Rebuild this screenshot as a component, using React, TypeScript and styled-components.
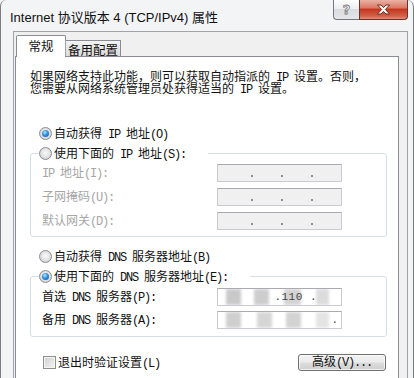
import React from 'react';
import styled, { createGlobalStyle } from 'styled-components';

const CJK = `"Noto Sans CJK SC", "Liberation Mono", sans-serif`;
const UI = `"Liberation Sans", "Noto Sans CJK SC", sans-serif`;

const GlobalStyle = createGlobalStyle`
  html, body { margin: 0; padding: 0; }
  body {
    width: 414px;
    height: 378px;
    overflow: hidden;
    background: #f3f4f6;
    font-family: ${CJK};
  }
`;

const Window = styled.div`
  width: 414px;
  height: 378px;
  box-sizing: border-box;
  display: flex;
  flex-direction: column;
  background: #f3f4f6;
  border-left: 1px solid #7d7d7d;
  border-right: 1px solid #7d7d7d;
  border-top-left-radius: 6px;
  border-top-right-radius: 7px;
  overflow: hidden;
`;

const TitleBar = styled.div`
  height: 31px;
  flex: none;
  display: flex;
  align-items: flex-start;
  padding: 0 5px 0 9px;
`;

const Title = styled.div`
  margin-top: 8px;
  font-family: ${UI};
  font-size: 13px;
  line-height: 19px;
  color: #111;
  white-space: nowrap;
`;

const Caption = styled.div`
  margin-left: auto;
  display: flex;
`;

const HelpButton = styled.div`
  width: 26px;
  height: 20px;
  box-sizing: border-box;
  border: 1px solid #74777c;
  border-top: none;
  border-right: none;
  border-bottom-left-radius: 4px;
  background: linear-gradient(#fdfdfd 0%, #eceef0 45%, #d9dcdf 50%, #e4e6e8 100%);
  display: flex;
  align-items: center;
  justify-content: center;
  font-family: "DejaVu Sans", sans-serif;
  font-size: 13px;
  font-weight: bold;
  color: #f4f4f4;
  -webkit-text-stroke: 0.8px #7a7a7a;
`;

const CloseButton = styled.div`
  width: 49px;
  height: 20px;
  box-sizing: border-box;
  border: 1px solid #6a3328;
  border-top: none;
  border-bottom-right-radius: 4px;
  background: linear-gradient(#eab2a5 0%, #dd7a66 40%, #c5371f 50%, #d1624a 85%, #e0917f 100%);
  display: flex;
  align-items: center;
  justify-content: center;
`;

const Client = styled.div`
  flex: 1;
  margin: 0 5px 0 12px;
  border: 1px solid #a3a3a3;
  border-bottom: none;
  background: #f0f0f0;
  padding: 0 8px 0 1px;
  display: flex;
  flex-direction: column;
`;

const TabStrip = styled.div`
  display: flex;
  align-items: flex-end;
  padding: 3px 0 0 1px;
  margin-bottom: -1px;
  position: relative;
  z-index: 1;
`;

const Tab = styled.div<{ $active?: boolean }>`
  box-sizing: border-box;
  display: flex;
  justify-content: center;
  font-family: "Noto Sans CJK SC", sans-serif;
  font-size: 12.5px;
  color: #111;
  border: 1px solid #898c95;
  border-bottom: none;
  ${(p) =>
    p.$active
      ? `
    width: 50px;
    height: 22px;
    padding-top: 3px;
    line-height: 14px;
    background: #fff;
    border-radius: 2px 2px 0 0;
  `
      : `
    width: 56px;
    height: 16px;
    margin-bottom: 1px;
    margin-left: -1px;
    line-height: 17px;
    background: linear-gradient(#f3f3f3, #e6e6e6 50%, #dcdcdc 100%);
    border-left-color: #a0a3aa;
  `}
`;

const Page = styled.div`
  flex: 1;
  border: 1px solid #898c95;
  border-bottom: none;
  background: #fff;
  padding: 13px 0 0 14px;
  display: flex;
  flex-direction: column;
`;

const Intro = styled.div`
  display: flex;
  flex-direction: column;
  font-size: 12px;
  color: #111;
`;

const IntroLine = styled.span`
  display: flex;
  align-items: center;
  height: 12px;
  white-space: pre;
`;

const Run = styled.span`
  white-space: pre;
`;

const Lat = styled.span`
  font-family: "Liberation Mono", monospace;
  font-size: 12px;
  letter-spacing: -1.2px;
`;

function Txt({ children }: { children: string }) {
  const parts = children.split(/([\x00-\x7f]+)/).filter(Boolean);
  return (
    <Run>
      {parts.map((s, i) =>
        /^[\x00-\x7f]+$/.test(s) ? <Lat key={i}>{s}</Lat> : <React.Fragment key={i}>{s}</React.Fragment>
      )}
    </Run>
  );
}

const Options = styled.div`
  margin-top: 29px;
  width: 357px;
  display: flex;
  flex-direction: column;
`;

const OptionRow = styled.label<{ $gap?: number }>`
  height: 20px;
  display: flex;
  align-items: center;
  padding-left: 9px;
  margin-top: ${(p) => p.$gap ?? 0}px;
  font-size: 12px;
  color: #111;
`;

const RadioMark = styled.span<{ $checked?: boolean }>`
  width: 13px;
  height: 13px;
  box-sizing: border-box;
  flex: none;
  margin-right: 2px;
  border-radius: 50%;
  border: 1px solid #8a8d92;
  background: radial-gradient(circle at 50% 45%, #fafafa 0%, #e6e6e6 45%, #c3c4c6 100%);
  display: inline-flex;
  align-items: center;
  justify-content: center;
  &::after {
    content: '';
    display: ${(p) => (p.$checked ? 'block' : 'none')};
    width: 7px;
    height: 7px;
    border-radius: 50%;
    background: radial-gradient(circle at 40% 35%, #b4ecff 0%, #3b97e0 40%, #0e4b9e 100%);
  }
`;

const Group = styled.fieldset`
  margin: 0;
  padding: 0;
  box-sizing: border-box;
  width: 357px;
  border: 1px solid #d5dfe5;
  border-radius: 3px;
`;

const Legend = styled.legend`
  margin-left: 8px;
  padding: 0 22px 0 0;
  height: 20px;
  display: flex;
  align-items: center;
  font-size: 12px;
  color: #111;
`;

const Rows = styled.div<{ $top: number; $gap: number; $bottom: number }>`
  display: flex;
  flex-direction: column;
  gap: ${(p) => p.$gap}px;
  padding: ${(p) => p.$top}px 0 ${(p) => p.$bottom}px 11px;
`;

const FieldRow = styled.div`
  height: 18px;
  display: grid;
  grid-template-columns: 175px 125px;
  align-items: center;
`;

const FieldLabel = styled.span<{ $disabled?: boolean }>`
  font-size: 12px;
  line-height: 16px;
  color: ${(p) => (p.$disabled ? '#a6a6a6' : '#111')};
  white-space: pre;
`;

const IpField = styled.div<{ $disabled?: boolean }>`
  position: relative;
  height: 18px;
  box-sizing: border-box;
  border: 1px solid #c9cbd0;
  border-top-color: #a9abb0;
  background: ${(p) => (p.$disabled ? '#f0f0f0' : '#ffffff')};
  display: flex;
  align-items: center;
  justify-content: center;
  gap: 28px;
  padding-left: 4px;
  overflow: hidden;
`;

const Dot = styled.span`
  width: 2px;
  height: 2px;
  margin-top: 6px;
  background: #8d8d8d;
`;

const Blur = styled.div`
  position: absolute;
  inset: -2px 8px -2px -6px;
  display: flex;
  align-items: center;
  filter: blur(1.6px);
  background: radial-gradient(ellipse at 45% 50%, #ffffff 60%, rgba(255,255,255,0) 100%);
`;

const Patch = styled.span<{ $w: number; $ml: number; $shade: string }>`
  width: ${(p) => p.$w}px;
  height: 16px;
  margin-left: ${(p) => p.$ml}px;
  background: ${(p) => p.$shade};
  flex: none;
`;

const FieldValue = styled.span`
  position: absolute;
  right: 24px;
  top: 1px;
  font-family: "Liberation Mono", monospace;
  font-size: 11px;
  line-height: 14px;
  letter-spacing: 0.5px;
  color: #444;
`;

const TailDot = styled.span`
  position: absolute;
  right: 3px;
  top: 2px;
  font-family: "Liberation Mono", monospace;
  font-size: 11px;
  line-height: 12px;
  color: #444;
`;

const Footer = styled.div`
  margin-top: 15px;
  width: 357px;
  height: 20px;
  display: flex;
  align-items: center;
  justify-content: space-between;
`;

const CheckLabel = styled.label`
  display: flex;
  align-items: center;
  padding-left: 13px;
  font-size: 12px;
  color: #111;
`;

const CheckMark = styled.span`
  width: 13px;
  height: 13px;
  box-sizing: border-box;
  flex: none;
  margin-right: 2px;
  border: 1px solid #8e8f8f;
  background: linear-gradient(135deg, #cfcfcf 0%, #e6e6e6 60%, #f6f6f6 100%);
  box-shadow: inset 0 0 0 1px #f4f4f4;
`;

const PushButton = styled.button`
  width: 88px;
  height: 17px;
  margin-right: 1px;
  padding: 0;
  box-sizing: border-box;
  border: 1px solid #707070;
  border-radius: 3px;
  background: linear-gradient(#f2f2f2 0%, #ebebeb 48%, #dddddd 52%, #cfcfcf 100%);
  box-shadow: inset 0 0 0 1px rgba(255,255,255,0.7);
  display: flex;
  align-items: center;
  justify-content: center;
  font-family: ${CJK};
  font-size: 12px;
  line-height: 14px;
  color: #111;
`;

const CloseGlyph = () => (
  <svg width="15" height="11" viewBox="0 0 15 11">
    <path
      d="M1.5 1 H5 L7.5 3.6 L10 1 H13.5 L9.4 5.5 L13.5 10 H10 L7.5 7.4 L5 10 H1.5 L5.6 5.5 Z"
      fill="#ffffff"
      stroke="#6b2a1e"
      strokeWidth="1"
      strokeLinejoin="round"
    />
  </svg>
);

const dots = (
  <>
    <Dot />
    <Dot />
    <Dot />
  </>
);

export default function App() {
  return (
    <>
      <GlobalStyle />
      <Window>
        <TitleBar>
          <Title>Internet 协议版本 4 (TCP/IPv4) 属性</Title>
          <Caption>
            <HelpButton>?</HelpButton>
            <CloseButton>
              <CloseGlyph />
            </CloseButton>
          </Caption>
        </TitleBar>
        <Client>
          <TabStrip>
            <Tab $active>常规</Tab>
            <Tab>备用配置</Tab>
          </TabStrip>
          <Page>
            <Intro>
              <IntroLine>
                <Txt>如果网络支持此功能，则可以获取自动指派的 IP 设置。否则，</Txt>
              </IntroLine>
              <IntroLine>
                <Txt>您需要从网络系统管理员处获得适当的 IP 设置。</Txt>
              </IntroLine>
            </Intro>
            <Options>
              <OptionRow>
                <RadioMark $checked />
                <Txt>自动获得 IP 地址(O)</Txt>
              </OptionRow>
              <Group>
                <Legend>
                  <RadioMark />
                  <Txt>使用下面的 IP 地址(S):</Txt>
                </Legend>
                <Rows $top={1} $gap={6} $bottom={6}>
                  <FieldRow>
                    <FieldLabel $disabled><Txt>IP 地址(I):</Txt></FieldLabel>
                    <IpField $disabled>{dots}</IpField>
                  </FieldRow>
                  <FieldRow>
                    <FieldLabel $disabled><Txt>子网掩码(U):</Txt></FieldLabel>
                    <IpField $disabled>{dots}</IpField>
                  </FieldRow>
                  <FieldRow>
                    <FieldLabel $disabled><Txt>默认网关(D):</Txt></FieldLabel>
                    <IpField $disabled>{dots}</IpField>
                  </FieldRow>
                </Rows>
              </Group>
              <OptionRow $gap={9}>
                <RadioMark />
                <Txt>自动获得 DNS 服务器地址(B)</Txt>
              </OptionRow>
              <Group>
                <Legend>
                  <RadioMark $checked />
                  <Txt>使用下面的 DNS 服务器地址(E):</Txt>
                </Legend>
                <Rows $top={2} $gap={5} $bottom={7}>
                  <FieldRow>
                    <FieldLabel><Txt>首选 DNS 服务器(P):</Txt></FieldLabel>
                    <IpField>
                      <Blur>
                        <Patch $w={15} $ml={14} $shade="#c9c9c9" />
                        <Patch $w={15} $ml={13} $shade="#cdcdcd" />
                        <Patch $w={17} $ml={15} $shade="#d3d3d3" />
                        <Patch $w={13} $ml={15} $shade="#dcdcdc" />
                      </Blur>
                      <FieldValue>.110 .</FieldValue>
                    </IpField>
                  </FieldRow>
                  <FieldRow>
                    <FieldLabel><Txt>备用 DNS 服务器(A):</Txt></FieldLabel>
                    <IpField>
                      <Blur>
                        <Patch $w={15} $ml={14} $shade="#cfcfcf" />
                        <Patch $w={15} $ml={16} $shade="#d6d6d6" />
                        <Patch $w={15} $ml={14} $shade="#d3d3d3" />
                        <Patch $w={13} $ml={15} $shade="#e4e4e4" />
                      </Blur>
                      <TailDot>.</TailDot>
                    </IpField>
                  </FieldRow>
                </Rows>
              </Group>
              <Footer>
                <CheckLabel>
                  <CheckMark />
                  <Txt>退出时验证设置(L)</Txt>
                </CheckLabel>
                <PushButton type="button">
                  <Txt>高级(V)...</Txt>
                </PushButton>
              </Footer>
            </Options>
          </Page>
        </Client>
      </Window>
    </>
  );
}
